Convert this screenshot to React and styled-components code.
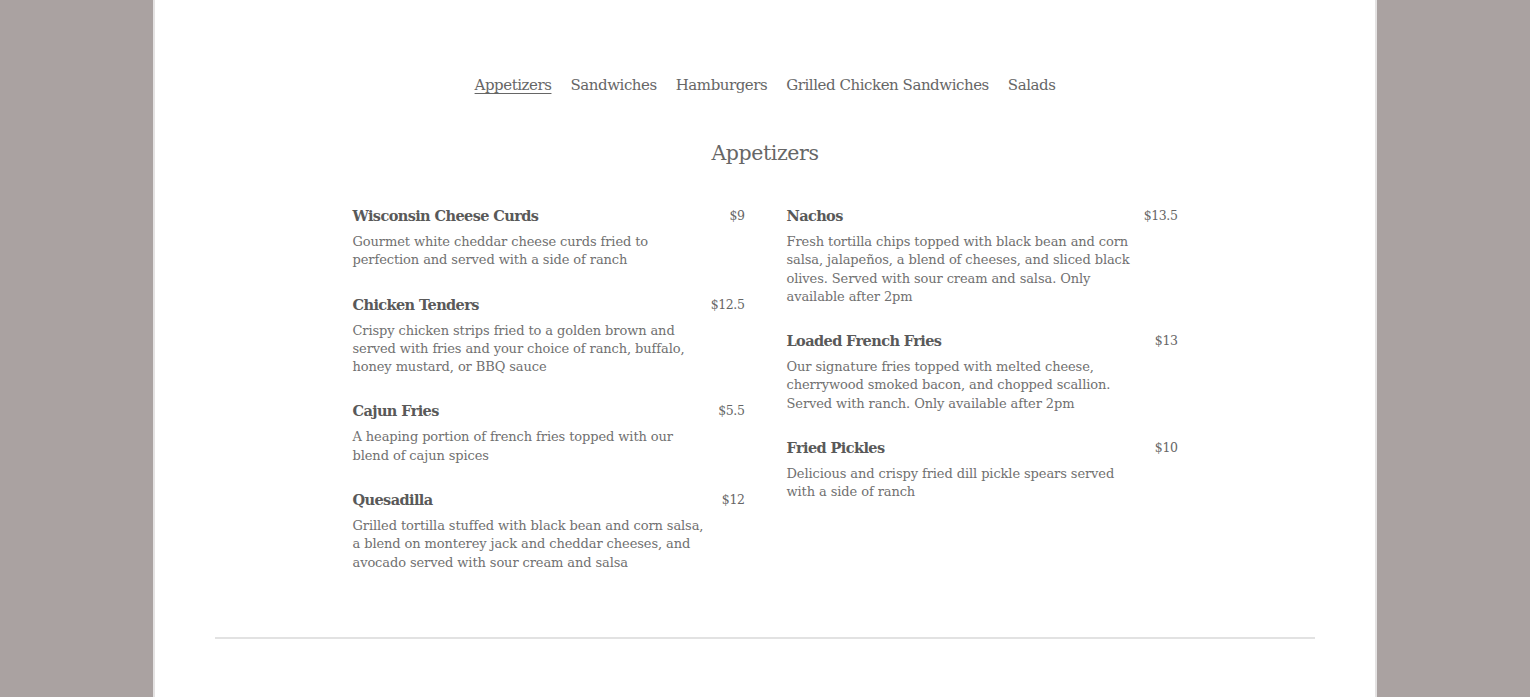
import React from 'react'
import styled, { createGlobalStyle } from 'styled-components'

const GlobalStyle = createGlobalStyle`
  html, body {
    margin: 0;
    background: #aaa2a1;
  }
  body {
    font-family: 'DejaVu Serif', 'Liberation Serif', serif;
    color: #666;
  }
`;

const Page = styled.div`
  box-sizing: border-box;
  width: 1224px;
  min-height: 697px;
  margin: 0 auto;
  background: #fff;
  border-left: 2px solid #e4e2e2;
  border-right: 2px solid #e4e2e2;
  padding-top: 73px;
`;

const Nav = styled.nav`
  display: flex;
  justify-content: center;
  gap: 19px;
  font-size: 15px;
  letter-spacing: -0.45px;
  line-height: 24px;

  a {
    color: #666;
    text-decoration: none;
    &.active {
      text-decoration: underline;
      text-underline-offset: 3px;
    }
  }
`;

const Title = styled.h2`
  margin: 41px 0 0;
  text-align: center;
  font-size: 20.5px;
  letter-spacing: -0.4px;
  font-weight: 300;
  line-height: 30px;
  color: #666;
`;

const Columns = styled.div`
  width: 825px;
  margin: 36px auto 0;
  display: grid;
  grid-template-columns: 392px 391px;
  justify-content: space-between;
  align-items: start;
`;

const Column = styled.div`
  display: flex;
  flex-direction: column;
  gap: 23px;
`;

const Item = styled.div`
  display: grid;
  grid-template-columns: 1fr auto;
  column-gap: 12px;
`;

const Name = styled.h3`
  margin: 0;
  font-size: 14.5px;
  letter-spacing: -0.6px;
  line-height: 24px;
  font-weight: 700;
  color: #595959;
`;

const Price = styled.span`
  font-size: 12.5px;
  letter-spacing: -0.4px;
  line-height: 24px;
  color: #666;
  text-align: right;
`;

const Desc = styled.p`
  grid-column: 1 / -1;
  margin: 5px 0 0;
  max-width: 356px;
  font-size: 13px;
  letter-spacing: -0.1px;
  line-height: 18.3px;
  color: #707070;
`;

const Divider = styled.hr`
  width: 1100px;
  margin: 65px auto 0;
  border: 0;
  border-top: 2px solid #e2e2e2;
`;

const left = [
  ['Wisconsin Cheese Curds', '$9', 'Gourmet white cheddar cheese curds fried to perfection and served with a side of ranch'],
  ['Chicken Tenders', '$12.5', 'Crispy chicken strips fried to a golden brown and served with fries and your choice of ranch, buffalo, honey mustard, or BBQ sauce'],
  ['Cajun Fries', '$5.5', 'A heaping portion of french fries topped with our blend of cajun spices'],
  ['Quesadilla', '$12', 'Grilled tortilla stuffed with black bean and corn salsa, a blend on monterey jack and cheddar cheeses, and avocado served with sour cream and salsa'],
];

const right = [
  ['Nachos', '$13.5', 'Fresh tortilla chips topped with black bean and corn salsa, jalapeños, a blend of cheeses, and sliced black olives. Served with sour cream and salsa. Only available after 2pm'],
  ['Loaded French Fries', '$13', 'Our signature fries topped with melted cheese, cherrywood smoked bacon, and chopped scallion. Served with ranch. Only available after 2pm'],
  ['Fried Pickles', '$10', 'Delicious and crispy fried dill pickle spears served with a side of ranch'],
];

const tabs = ['Appetizers', 'Sandwiches', 'Hamburgers', 'Grilled Chicken Sandwiches', 'Salads'];

function MenuColumn({ items }) {
  return (
    <Column>
      {items.map(([name, price, desc]) => (
        <Item key={name}>
          <Name>{name}</Name>
          <Price>{price}</Price>
          <Desc>{desc}</Desc>
        </Item>
      ))}
    </Column>
  )
}

export default function App() {
  return (
    <>
      <GlobalStyle />
      <Page>
        <Nav>
          {tabs.map((t, i) => (
            <a key={t} href='#' className={i === 0 ? 'active' : ''}>{t}</a>
          ))}
        </Nav>
        <Title>Appetizers</Title>
        <Columns>
          <MenuColumn items={left} />
          <MenuColumn items={right} />
        </Columns>
        <Divider />
      </Page>
    </>
  )
}
